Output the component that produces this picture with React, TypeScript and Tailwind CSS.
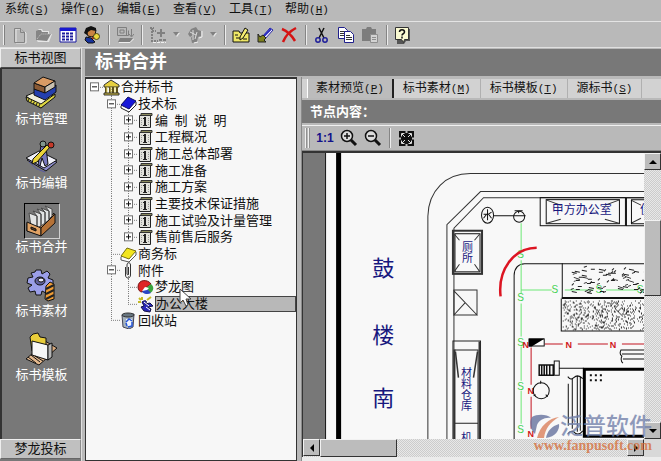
import type { ReactNode } from "react";

const menus = [
  { label: "系统", hotkey: "S" },
  { label: "操作", hotkey: "O" },
  { label: "编辑", hotkey: "E" },
  { label: "查看", hotkey: "V" },
  { label: "工具", hotkey: "T" },
  { label: "帮助", hotkey: "H" },
];

const tabs = [
  { label: "素材预览", hotkey: "P", active: true },
  { label: "标书素材", hotkey: "M", active: false },
  { label: "标书模板", hotkey: "T", active: false },
  { label: "源标书", hotkey: "S", active: false },
];

type TreeIcon = "bank" | "bluebook" | "doc" | "yellowbook" | "clip" | "chart" | "design" | "bin";

// guides: one entry per column. "|" line through, "+" branch, "L" last branch, " " empty
type TreeNode = { text: string; icon: TreeIcon; guides: string; box?: "+" | "-"; selected?: boolean; pointer?: boolean };

const treeNodes: TreeNode[] = [
  { text: "合并标书", icon: "bank", guides: "-", box: "-" },
  { text: "技术标", icon: "bluebook", guides: " +", box: "-" },
  { text: "编\u2002制\u2002说\u2002明", icon: "doc", guides: " |+", box: "+" },
  { text: "工程概况", icon: "doc", guides: " |+", box: "+" },
  { text: "施工总体部署", icon: "doc", guides: " |+", box: "+" },
  { text: "施工准备", icon: "doc", guides: " |+", box: "+" },
  { text: "施工方案", icon: "doc", guides: " |+", box: "+" },
  { text: "主要技术保证措施", icon: "doc", guides: " |+", box: "+" },
  { text: "施工试验及计量管理", icon: "doc", guides: " |+", box: "+" },
  { text: "售前售后服务", icon: "doc", guides: " |L", box: "+" },
  { text: "商务标", icon: "yellowbook", guides: " +" },
  { text: "附件", icon: "clip", guides: " +", box: "-" },
  { text: "梦龙图", icon: "chart", guides: " |+", pointer: true },
  { text: "办公大楼", icon: "design", guides: " |L", selected: true },
  { text: "回收站", icon: "bin", guides: " L" },
];

function Hotkey({ letter }: { letter: string }) {
  return (
    <span className="font-['Liberation_Mono',monospace] text-[11px]">
      (<u>{letter}</u>)
    </span>
  );
}

function Separator() {
  return (
    <div className="flex h-5 w-[9px] shrink-0 justify-center">
      <div className="w-[2px] border-l border-[#858585] bg-[#ececec]" />
    </div>
  );
}

function ToolButton({ label, children }: { label: string; children: ReactNode }) {
  return (
    <button type="button" aria-label={label} className="flex h-6 w-6 shrink-0 items-center justify-center">
      <svg width="18" height="18" viewBox="0 0 18 18" fill="none">
        {children}
      </svg>
    </button>
  );
}

function DropButton({ label }: { label: string }) {
  return (
    <button type="button" aria-label={label} className="flex h-6 w-[13px] shrink-0 items-center justify-center">
      <svg width="7" height="5" viewBox="0 0 7 5">
        <path d="M1 1h6L4 5z" fill="#e6e6e6" />
        <path d="M0 0h6L3 4z" fill="#808080" />
      </svg>
    </button>
  );
}

function MainToolbar() {
  return (
    <div className="flex h-[25px] items-center overflow-hidden pl-[3px]">
      <div className="mr-[3px] h-5 w-[2px] shrink-0 border-r border-[#808080] bg-[#eeeeee]" />
      <ToolButton label="新建">
        <path d="M5 3h6l4 4v10H5z" stroke="#e8e8e8" />
        <path d="M4 2.500h6l3.500 3.500v10.500H3.500v-14zM9.500 2.500v4h4" stroke="#848484" />
      </ToolButton>
      <ToolButton label="打开">
        <path d="M2 15V5l2-2h3l1 2h6v3h3l-3 8H3z" fill="#e6e6e6" />
        <path d="M1 14V5l2-1h3l1 2h6v2h3l-4 7z" fill="#858585" />
        <path d="M2 13l4-5h9" stroke="#c8c8c8" strokeDasharray="1 1" />
      </ToolButton>
      <ToolButton label="列表">
        <path d="M1 2h16v14H1z" fill="#fff" stroke="#1717a0" />
        <path d="M1 2h16v3H1z" fill="#1a1ad0" />
        <path d="M3 7.500h12M3 10.500h12M3 13.500h12" stroke="#1d1d9c" strokeWidth="2" strokeDasharray="3 1" />
      </ToolButton>
      <ToolButton label="用户">
        <path d="M3 5c0-4 9-4 10-1l-1 5-3 2-4-1z" fill="#c98343" stroke="#111" />
        <path d="M1 7l2-5 5-2 5 2v3L8 4 5 6 4 9z" fill="#111" />
        <path d="M3 11l5 1 4 4-2 1H5l-3-3z" fill="#16329b" stroke="#111" />
        <path d="M9 12h3" stroke="#a43220" strokeWidth="2" />
        <circle cx="13.500" cy="10.500" r="3" fill="#ead83d" stroke="#4f4715" />
      </ToolButton>
      <Separator />
      <ToolButton label="输出">
        <path d="M1.500 1.500h9v8h-9zM4 4h4v3H4zM6 9.500h6.500v-5" stroke="#7f7f7f" />
        <path d="M15.500 3v7M13 8l2.500 3L18 8" stroke="#7f7f7f" />
        <path d="M4 12h13l-3 4H2z" fill="#7f7f7f" />
        <path d="M3 16.500h11l4-4" stroke="#eee" />
      </ToolButton>
      <Separator />
      <ToolButton label="添加节点">
        <path d="M3 2v13h6M3 5h4M1 2h4" stroke="#808080" strokeWidth="2" strokeDasharray="2 1" />
        <path d="M12 3v8M8 7h8" stroke="#808080" strokeWidth="2" />
        <path d="M4 16.500h13" stroke="#efefef" strokeDasharray="3 1" />
        <path d="M10 14h7" stroke="#808080" strokeWidth="2" strokeDasharray="3 1" />
      </ToolButton>
      <DropButton label="添加节点选项" />
      <ToolButton label="更新">
        <path d="M2 8l3-5 5-2 2 3 3 1v5l-3 1-1 5-5 1-1-5 2-3-3 2z" fill="#838383" />
        <path d="M7 4v10M4 6l6 3M11 6l-2 7" stroke="#ddd" />
        <path d="M13 12l3-1v-6M8 17l4-1" stroke="#f0f0f0" />
      </ToolButton>
      <DropButton label="更新选项" />
      <Separator />
      <ToolButton label="属性">
        <path d="M1 5h6l1 2h9v9H1z" fill="#eee766" stroke="#111" />
        <path d="M8 11l5-9 3 2-5 8-3 2z" fill="#f4ed72" stroke="#111" />
        <path d="M4 12h4M11 13h4M3 9h3" stroke="#111" />
      </ToolButton>
      <ToolButton label="编辑">
        <path d="M6 11l8-9 3 2-8 9z" fill="#fff" stroke="#2424a8" />
        <path d="M7 11l8-8" stroke="#2a2ac0" strokeWidth="2" />
        <path d="M2 8v8h8l-2-2 2-2-3-3-3 2z" fill="#7d801d" stroke="#222" />
      </ToolButton>
      <ToolButton label="删除">
        <path d="M2 3c5 2 10 7 13 12M16 2C10 5 5 11 3 16" stroke="#d51414" strokeWidth="2.500" />
      </ToolButton>
      <Separator />
      <ToolButton label="剪切">
        <path d="M6 2l5 10M11 2L6 12" stroke="#111" strokeWidth="1.500" />
        <circle cx="5" cy="14" r="2.200" stroke="#20209a" strokeWidth="1.500" />
        <circle cx="12" cy="14" r="2.200" stroke="#20209a" strokeWidth="1.500" />
      </ToolButton>
      <ToolButton label="复制">
        <path d="M1.500 1.500h6l3 3v8h-9z" fill="#fff" stroke="#20208c" />
        <path d="M3 5.500h5M3 7.500h4M3 9.500h4" stroke="#333" />
        <path d="M7.500 5.500h6l3 3v8h-9z" fill="#fff" stroke="#20208c" />
        <path d="M9 9.500h4M9 11.500h6M9 13.500h6" stroke="#333" />
      </ToolButton>
      <ToolButton label="粘贴">
        <path d="M1 3h4l1-2h4l1 2h4v12H1z" fill="#7d7d7d" />
        <path d="M9.500 8.500h7v8h-7z" fill="#d3d3d3" stroke="#8e8e8e" />
        <path d="M11 11.500h4M11 13.500h4" stroke="#8e8e8e" />
      </ToolButton>
      <Separator />
      <ToolButton label="帮助">
        <path d="M3 3h13v12h-4l-2 3H3z" fill="#555" />
        <path d="M1.500 1.500h13v12h-4l-1 3-2-3h-6z" fill="#fafad2" stroke="#333" />
        <path d="M5.500 6c0-3 5-3 5 0 0 2-2.500 1.500-2.500 3.500M8 10.500v2" stroke="#111" strokeWidth="1.500" />
      </ToolButton>
    </div>
  );
}

function NavItem({ label, selected, children }: { label: string; selected?: boolean; children: ReactNode }) {
  return (
    <button type="button" className="flex h-16 w-full flex-col items-center text-[13px] leading-4 text-white">
      <span
        className={
          selected
            ? "h-9 w-9 border border-t-black border-l-black border-r-[#d0d0d0] border-b-[#d0d0d0]"
            : "h-9 w-9 border border-transparent"
        }
      >
        <svg width="34" height="34" viewBox="0 0 34 34" fill="none" stroke="#111" strokeLinejoin="round">
          {children}
        </svg>
      </span>
      {label}
    </button>
  );
}

function Sidebar() {
  return (
    <aside className="flex w-[82px] shrink-0 flex-col border-r border-[#e0e0e0] bg-[#787878]">
      <button type="button" className="h-5 border border-t-[#eeeeee] border-l-[#eeeeee] border-r-[#8c8c8c] border-b-[#4a4a4a] bg-[#c4c4c4] text-[13px] leading-4">
        标书视图
      </button>
      <nav className="flex-1 border-t border-l-2 border-[#333333] pt-[6px]">
        <NavItem label="标书管理">
          <path d="M1 20l14-6 14 6-13 12z" fill="#f1efda" />
          <path d="M1 21l15 7 14-10v3L16 32 2 25z" fill="#ded640" />
          <path d="M3 24l12 6" stroke="#222" strokeWidth="3" strokeDasharray="1 2" />
          <path d="M9 13v6l11 5 11-8v-7l-10 7z" fill="#243fae" />
          <path d="M9 7l11 4v6L9 13z" fill="#8a5a35" />
          <path d="M9 7l9-6 12 4-10 6z" fill="#d99b64" />
          <path d="M20 11l10-6v6l-10 6z" fill="#c9c0b0" />
        </NavItem>
        <NavItem label="标书编辑">
          <path d="M2 20l13-6 17 8-11 9z" fill="#8b8bc9" />
          <path d="M1 18l13-7 18 9-13 8z" fill="#f1f1fa" />
          <path d="M16 5l5 2 2 17-3 2-3-8-2 8-2-1z" fill="#7777bb" />
          <circle cx="18" cy="4" r="3" fill="#80978e" />
          <path d="M8 19L22 5l3 2-13 15-5 2z" fill="#ead33a" />
          <circle cx="26" cy="5" r="3" fill="#c43929" />
          <path d="M4 22l8 7 8 3" stroke="#5858a4" />
        </NavItem>
        <NavItem label="标书合并" selected>
          <path d="M2 19l13 4 14-14v10L16 31 2 27z" fill="#d28d4c" />
          <path d="M4 9l8 3v13l-6-3zM8 7l8 3v12l-4 2V12zM12 5l8 3v11l-4 3V10zM16 4l8 3v9l-4 3V8zM20 2l7 3v7l-3 3V7z" fill="#e2e4e4" stroke="#4a4a4a" />
          <path d="M2 18l14 6v8L2 27z" fill="#e0a264" />
          <path d="M16 24l14-14v9L16 32z" fill="#b57237" />
          <path d="M6 23l5 2v2l-5-2z" fill="#5f3d20" />
        </NavItem>
        <NavItem label="标书素材">
          <path d="M11 2h5l1 4 5-3 3 3-2 4 5 2v5l-5 1 2 4-4 3-4-2-1 4h-5l-1-4-5 1-2-4 4-3-5-2 1-5 5-1-2-4 4-1z" fill="#9a9ee8" />
          <ellipse cx="15" cy="13" rx="5" ry="4" fill="#60609d" />
          <ellipse cx="16" cy="12" rx="3" ry="2" fill="#e6e6ff" />
          <path d="M21 18l4-4 4 2v15l-6 2-3-2z" fill="#ef9c35" />
          <path d="M21 21l8-4M21 26l8-4M21 31l8-4" stroke="#222" strokeWidth="2" />
        </NavItem>
        <NavItem label="标书模板">
          <path d="M20 9l12 7-9 8z" fill="#d9aa7d" />
          <path d="M1 27l7-6 14 5-8 7z" fill="#e5b98d" />
          <path d="M5 5l3-3 5-1 2 4 6 1v17L7 19z" fill="#e9cd3a" />
          <path d="M7 9l16 4v15L7 23z" fill="#f7f7f7" />
          <path d="M23 13l4-2v14l-4 3z" fill="#b6b6b6" />
          <path d="M3 25l8 6M6 23l9 7M10 24l8 5" />
        </NavItem>
      </nav>
      <button type="button" className="mb-[2px] h-5 border border-t-[#eeeeee] border-l-[#eeeeee] border-r-[#8c8c8c] border-b-[#666666] bg-[#c0c0c0] text-[13px] leading-4">
        梦龙投标
      </button>
    </aside>
  );
}

const treeIcons: Record<TreeIcon, ReactNode> = {
  bank: (
    <>
      <path d="M1 6l7-5 8 5v2H1z" fill="#e6cf3d" stroke="#333" />
      <path d="M3 8v6M7 8v6M10 8v6M14 8v6" stroke="#5d5018" strokeWidth="2" />
      <path d="M4 8v6M8 8v6M12 8v6" stroke="#f2e56c" />
      <path d="M1 14h15v2H1z" fill="#d2bd36" stroke="#333" />
    </>
  ),
  bluebook: (
    <>
      <path d="M1 10l7-8 8 4v3l-7 7-8-4z" fill="#fff" stroke="#222" />
      <path d="M1 9l7-8 8 4-7 8z" fill="#1717d8" stroke="#101060" />
    </>
  ),
  doc: (
    <>
      <path d="M2.500 3.500h11v12h-11z" fill="#e2e2dc" stroke="#222" />
      <path d="M4 1.500h11v2H4z" fill="#8b8b5e" stroke="#333" />
      <path d="M4.500 6v8M11.500 6v8" stroke="#999" strokeDasharray="1 1" />
      <path d="M7 5h2v8H7zM6 6h2v1H6zM6 13h4v1H6z" fill="#222" />
    </>
  ),
  yellowbook: (
    <>
      <path d="M1 11l6-8 9 3v3l-7 7-8-2z" fill="#fff" stroke="#555" />
      <path d="M1 10l6-8 9 3-7 8z" fill="#f2e51d" stroke="#777013" />
    </>
  ),
  clip: (
    <path d="M5.500 5v8c0 4 5 4 5 0V3c0-3-3.500-3-3.500 0v9c0 1 1.500 1 1.500 0V5" stroke="#333" />
  ),
  chart: (
    <>
      <path d="M1 8c0-8 10-8 13-3l-6 4-3 4c-2 0-4-2-4-5z" fill="#df2525" stroke="#761616" />
      <path d="M14 5c4 3 2 8-1 9l-4-5z" fill="#39a43c" />
      <path d="M5 13l4-4 5 5c-3 2-7 1-9-1z" fill="#2945c5" />
      <path d="M5 12l3-4 4 1-2 2z" fill="#fff" />
    </>
  ),
  design: (
    <>
      <path d="M2 2l2 2M5 1v3M1 6h3M10 4l4-3" stroke="#c4ba24" strokeWidth="2" />
      <path d="M5 6c4-3 6 0 3 2l5-1 3 3-5 1 3 2-1 3-6-1-3-4 3-1z" fill="#2828b8" stroke="#111145" />
      <path d="M7 6l5 4M9 11l4 3" stroke="#fff" />
    </>
  ),
  bin: (
    <>
      <path d="M2 3l12-1-1 13-4 2-6-2z" fill="#a6b3bd" stroke="#445" />
      <ellipse cx="8" cy="3" rx="6" ry="2" fill="#687680" stroke="#333" />
      <path d="M6 7h6v7H6z" fill="#eef4ff" />
      <path d="M6 10l3-3 3 2M12 10v4l-4 1M7 14l-1-3" stroke="#2453d5" strokeWidth="1.500" />
    </>
  ),
};

function GuideCell({ kind, box, opensBelow }: { kind: string; box?: "+" | "-"; opensBelow?: boolean }) {
  return (
    <svg className="h-full w-[17px] shrink-0 overflow-visible" stroke="#808080" strokeDasharray="1 1">
      {kind === "|" || kind === "+" ? <line x1="8.5" x2="8.5" y1="0" y2="100%" /> : null}
      {kind === "L" ? <line x1="8.5" x2="8.5" y1="0" y2="50%" /> : null}
      {kind === "+" || kind === "L" || kind === "-" ? <line x1="8" x2="18" y1="50%" y2="50%" /> : null}
      {opensBelow ? <line x1="25.5" x2="25.5" y1="60%" y2="100%" /> : null}
      {box ? (
        <svg y="50%" overflow="visible" strokeDasharray="none">
          <rect x="4.5" y="-4.500" width="8" height="8" fill="#fff" stroke="#707070" />
          <path d={box === "+" ? "M6 -.5h5M8.500 -3v5" : "M6 -.5h5"} stroke="#111" />
        </svg>
      ) : null}
    </svg>
  );
}

function TreeView() {
  return (
    <div className="w-[212px] shrink-0 overflow-hidden border border-t-2 border-[#333333] bg-[#f7f7f7] text-[13px]">
      <ul className="grid h-[250px] auto-rows-fr">
        {treeNodes.map((node) => (
          <li key={node.text} className="flex min-h-0 items-center">
            {node.guides.split("").map((kind, i, all) => (
              <GuideCell
                key={i}
                kind={kind}
                box={i === all.length - 1 ? node.box : undefined}
                opensBelow={i === all.length - 1 && node.box === "-"}
              />
            ))}
            <svg width="17" height="17" viewBox="0 0 17 17" fill="none" className="relative mr-px shrink-0">
              {treeIcons[node.icon]}
            </svg>
            {node.selected ? (
              <span className="h-4 flex-1 border border-[#444444] bg-[#b8b8b8] leading-[14px]">{node.text}</span>
            ) : (
              <span className="relative leading-4 whitespace-nowrap">
                {node.text}
                {node.pointer ? (
                  <svg width="13" height="20" viewBox="0 0 13 20" className="absolute top-[9px] left-[24px] z-10">
                    <path d="M1 1v14l3-3 3 6 2-1-2-6h5z" fill="#fff" stroke="#444" />
                  </svg>
                ) : null}
              </span>
            )}
          </li>
        ))}
      </ul>
    </div>
  );
}

// small fixed-seed generator, keeps the hatching stable between renders
function scatter(count: number, seed: number) {
  const points: number[][] = [];
  let s = seed;
  const next = () => {
    s = (s * 16807) % 2147483647;
    return s / 2147483647;
  };
  for (let i = 0; i < count; i++) points.push([next(), next(), next()]);
  return points;
}

const grassPath = scatter(75, 4211)
  .map(([a, b, c]) => `M${Math.round(570 + a * 74)} ${Math.round(268 + b * 27)}l${Math.round(2 + c * 4)} ${Math.round(c * 4 - 2)}`)
  .join("");

const gravelPath = scatter(560, 977)
  .map(([a, b]) => `M${Math.round(563 + a * 80)} ${Math.round(301 + b * 29)}h1`)
  .join("");

function PlanText({ x, y, size, children }: { x: number; y: number; size: number; children: string }) {
  return (
    <text x={x} y={y} fontSize={size} textAnchor="middle" dominantBaseline="central" fill="#17177e" stroke="none">
      {children}
    </text>
  );
}

// room names written top to bottom, y is the top of the first character
function RoomText({ x, y, children }: { x: number; y: number; children: string }) {
  return (
    <text x={x} y={y} fontSize="11" writingMode="vertical-rl" fill="#17177e" stroke="none">
      {children}
    </text>
  );
}

function SitePlan() {
  return (
    <svg viewBox="304 154 340 286" preserveAspectRatio="xMinYMin slice" className="block h-full w-full" fill="none" stroke="#333">
      <rect x="304" y="153" width="22" height="900" fill="#787878" stroke="none" />
      <path d="M326.500 153v900" stroke="#111" />
      <path d="M339.500 153v900" stroke="#000" strokeWidth="5" />

      {/* roads */}
      <path d="M428.500 900V217C429 192 446 174 472 174.500H1200" />
      <path d="M447.500 900V225.500L481 192.500H1200" />
      <path d="M454.500 900V229L484 198.500H1200" />
      <path d="M514.500 900V276Q515 265 525 264.500H1200" stroke="#111" />

      <PlanText x={384} y={269} size={22}>鼓</PlanText>
      <PlanText x={384} y={336} size={22}>楼</PlanText>
      <PlanText x={384} y={399} size={22}>南</PlanText>

      {/* left column of rooms */}
      <rect x="453.500" y="231.500" width="29" height="43" strokeWidth="2" />
      <rect x="455.500" y="234.500" width="25" height="38" stroke="#111" />
      <path d="M455 235l5 6M480 235l-5 6M455 272l5-7M480 272l-5-7" />
      <RoomText x={467} y={242}>厕所</RoomText>
      <path d="M454.500 290.500h23v25h-23zM454 291l24 25M466 303l-12 13" />
      <path d="M453.500 900V341.500h27.500V900M455 350.500h23.500V900M455 423.500h24" stroke="#222" />
      <path d="M455 350v549M480 342v557" strokeWidth="2" />
      <path d="M456 352l3 26M478 352l-4 26" strokeWidth="1.500" />
      <RoomText x={466} y={368}>材料仓库</RoomText>
      <RoomText x={466} y={432}>机</RoomText>

      {/* water supply */}
      <ellipse cx="488" cy="216" rx="6" ry="8" stroke="#111" />
      <path d="M488 210v11M484 215h3l-3 4M492 213l-3 2 3 4M494 216.500h19M515 211.500h8M519 211v3M513 216.500h13" stroke="#111" />
      <circle cx="519.500" cy="217.500" r="5.500" stroke="#111" />
      <g stroke="#6de877">
        <path d="M521.500 224v27M521.500 261v33M521.500 304v33M521.500 347v34M521.500 391v33M522 290.500h30M565 290.500h29M606 290.500h32" />
        <g fill="#45d254" stroke="none" fontSize="10" textAnchor="middle">
          <text x="521" y="259">S</text>
          <text x="521" y="302">S</text>
          <text x="521" y="346">S</text>
          <text x="521" y="390">S</text>
          <text x="521" y="433">S</text>
          <text x="555" y="294">S</text>
          <text x="599" y="294">S</text>
          <text x="640" y="294">S</text>
        </g>
      </g>
      <path d="M537 248.500C514 249 498 270 501 297" stroke="#dc1522" strokeWidth="2.500" />

      {/* offices */}
      <rect x="540.500" y="198.500" width="85" height="28" stroke="#111" />
      <rect x="546.500" y="200.500" width="73" height="24" stroke="#111" />
      <path d="M547 201l14 5M619 201l-14 5M547 224l14-4M619 224l-14-4M631 201l10 5M631 224l10-5" />
      <path d="M700 198.500h-73.500v28H700M700 200.500h-68.500v24H700" stroke="#111" />
      <PlanText x={582} y={211} size={12}>甲方办公室</PlanText>
      <PlanText x={646} y={211} size={12}>值</PlanText>

      {/* planting and gravel */}
      <path d="M562.500 264v34" stroke="#111" />
      <path d="M562 298.500h500" stroke="#111" strokeWidth="2" />
      <path d="M561.500 299v32.500H1062" stroke="#111" />
      <path d={grassPath} stroke="#222" />
      <path d={gravelPath} stroke="#333" transform="translate(0 .5)" />

      {/* power line */}
      <g stroke="#d46068">
        <path d="M545 344.500h18M578 344.500h30M622 344.500h200M531.500 348v37M531.500 397v32" strokeWidth="1.500" />
        <g fill="#d01822" stroke="none" fontSize="9" fontWeight="bold" textAnchor="middle">
          <text x="526" y="348">N</text>
          <text x="569" y="348">N</text>
          <text x="613" y="348">N</text>
          <text x="531" y="394">N</text>
          <text x="531" y="437">N</text>
        </g>
      </g>
      <path d="M529.500 339.500h15v7h-15z" fill="#fff" stroke="#111" />
      <path d="M529 339h16l-13 8h-3z" fill="#000" stroke="none" />

      {/* machine shed */}
      <path d="M539.500 365.500h14v10h-14zM542 365v10M544.500 365v10M547 365v10M550 365v10" stroke="#111" strokeWidth="1.500" />
      <path d="M554.500 361.500h5v14h-5zM559 368.500h25" stroke="#111" />
      <circle cx="541.500" cy="391" r="8" stroke="#111" />
      <path d="M541 381v3M534 396l2-1M548 397l-2-2" stroke="#111" />
      <path d="M1000 369.500H584.500v67H1000" stroke="#000" strokeWidth="3" />
      <path d="M568.500 384v42M572.500 379v50M577.500 376v56M580.500 377v54M568 377q3 4 6 1 4-4 9 1M568 434q3-4 6-2 4 5 9-1" stroke="#111" />
      <path d="M650 350.500h-29q-2 4 1 6-2 4 1 7M622 354.500h28M623 359.500h27" stroke="#111" />
      <path d="M590 375.500h14M590 380.500h14" stroke="#111" strokeWidth="2" strokeDasharray="2 3" />
    </svg>
  );
}

function ScrollButton({ label, d }: { label: string; d: string }) {
  return (
    <button
      type="button"
      aria-label={label}
      className="flex h-[17px] w-[17px] shrink-0 items-center justify-center border border-t-[#f2f2f2] border-l-[#f2f2f2] border-r-[#333333] border-b-[#333333] bg-[#bcbcbc]"
    >
      <svg width="8" height="8" viewBox="0 0 8 8">
        <path d={d} fill="#000" />
      </svg>
    </button>
  );
}

function Watermark() {
  return (
    <div className="pointer-events-none absolute right-[9px] bottom-2 z-20 flex flex-col items-end opacity-80">
      <div className="flex items-center">
        <svg width="30" height="25" viewBox="0 0 30 25">
          <path d="M2 3c5-3 15-3 19 1-6-1-12 2-14 7L5 20C0 16-1 7 2 3z" fill="#66739f" />
          <path d="M29 3C19 4 10 12 7 24h7C15 15 20 8 29 3z" fill="#dc815c" />
          <path d="M16 24c1-7 6-12 13-14 1 6-4 13-13 14z" fill="#66739f" />
        </svg>
        <span className="text-[23px] leading-[26px] font-medium text-[#7482ab]">泛普软件</span>
      </div>
      <span className="font-['Liberation_Serif',serif] text-[14px] leading-[14px] font-bold text-[#d5713f]">www.fanpusoft.com</span>
    </div>
  );
}

function PreviewPane() {
  return (
    <section className="ml-1 flex min-w-0 flex-1 flex-col border-l border-[#8a8a8a]">
      <div role="tablist" className="mt-[2px] flex h-[19px] bg-[#d2d2d2] pl-[5px] text-[12px] leading-[19px]">
        {tabs.map((tab) => (
          <button
            key={tab.label}
            type="button"
            role="tab"
            aria-selected={tab.active}
            className={
              tab.active
                ? "shrink-0 border-r-2 border-l border-l-white border-r-[#222222] bg-[#bcbcbc] px-2 whitespace-nowrap"
                : "shrink-0 border-r border-[#b0b0b0] px-[9px] whitespace-nowrap"
            }
          >
            {tab.label}
            <Hotkey letter={tab.hotkey} />
          </button>
        ))}
      </div>
      <h2 className="mt-[2px] h-[23px] bg-[#787878] pl-2 text-[13px] leading-[23px] font-bold text-white">节点内容：</h2>
      <div className="mt-[2px] flex h-[26px] items-center border-t border-b border-t-[#f0f0f0] border-b-[#888888] pl-[3px]">
        <div className="h-5 w-[2px] border-l border-[#f0f0f0] bg-[#909090]" />
        <div className="mr-[3px] ml-px h-5 w-[2px] border-l border-[#f0f0f0] bg-[#909090]" />
        <button type="button" className="h-6 w-6 text-[12px] font-bold text-[#12128a]">1:1</button>
        <ToolButton label="放大">
          <circle cx="7" cy="7" r="5.500" fill="#ddd" stroke="#111" strokeWidth="1.500" />
          <path d="M4 7h6M7 4v6" stroke="#111" strokeWidth="1.500" />
          <path d="M11 11l5 5" stroke="#111" strokeWidth="3" />
        </ToolButton>
        <ToolButton label="缩小">
          <circle cx="7" cy="7" r="5.500" fill="#ddd" stroke="#111" strokeWidth="1.500" />
          <path d="M4 7h6" stroke="#111" strokeWidth="1.500" />
          <path d="M11 11l5 5" stroke="#111" strokeWidth="3" />
        </ToolButton>
        <Separator />
        <ToolButton label="适合窗口">
          <path d="M2 2h15v15H2z" fill="#111" />
          <path d="M9.500 1v3M9.500 15v3M1 9.500h3M15 9.500h3" stroke="#bcbcbc" strokeWidth="2" />
          <path d="M4.500 7.500v-3h3M11.500 4.500h3v3M14.500 11.500v3h-3M7.500 14.500h-3v-3M5 5l3 3M14 5l-3 3M14 14l-3-3M5 14l3-3" stroke="#ddd" />
        </ToolButton>
      </div>
      <div className="grid min-h-0 flex-1 grid-cols-[1fr_17px] grid-rows-[1fr_18px] border-t-2 border-l border-[#333333]">
        <div className="min-h-0 overflow-hidden bg-[#f8f8f8]">
          <SitePlan />
        </div>
        <div className="flex flex-col bg-[repeating-conic-gradient(#e8e8e8_0_25%,#cccccc_0_50%)] bg-[length:2px_2px]">
          <ScrollButton label="向上滚动" d="M0 6h8L4 2z" />
          <div className="flex min-h-0 flex-1 flex-col">
            <div className="h-1/5" />
            <div className="h-[30%] border border-t-[#f2f2f2] border-l-[#f2f2f2] border-r-[#555555] border-b-[#333333] bg-[#bcbcbc]" />
          </div>
          <ScrollButton label="向下滚动" d="M0 2h8L4 6z" />
        </div>
        <div className="flex bg-[repeating-conic-gradient(#e8e8e8_0_25%,#cccccc_0_50%)] bg-[length:2px_2px]">
          <ScrollButton label="向左滚动" d="M6 0v8L2 4z" />
          <div className="flex flex-1">
            <div className="w-1/4 border border-t-[#f2f2f2] border-l-[#f2f2f2] border-r-[#333333] border-b-[#333333] bg-[#bcbcbc]" />
          </div>
          <ScrollButton label="向右滚动" d="M2 0v8l4-4z" />
        </div>
        <div className="bg-[#d8d8d8]" />
      </div>
      <div className="h-1 bg-[#ececec]" />
    </section>
  );
}

export default function App() {
  return (
    <div className="relative flex h-screen flex-col overflow-hidden bg-[#b9b9b9] font-['Liberation_Sans','Noto_Sans_CJK_SC',sans-serif] text-[#111111]">
      <nav className="flex h-[22px] shrink-0 border-b border-[#e4e4e4] pl-[5px] text-[12px] leading-[18px]">
        {menus.map((menu) => (
          <button key={menu.label} type="button" className="h-[18px] w-14 shrink-0 text-left whitespace-nowrap">
            {menu.label}
            <Hotkey letter={menu.hotkey} />
          </button>
        ))}
      </nav>
      <MainToolbar />
      <div className="flex min-h-0 flex-1 border-t border-[#e0e0e0]">
        <Sidebar />
        <main className="ml-[3px] flex min-w-0 flex-1 flex-col">
          <h1 className="mt-px h-[27px] shrink-0 bg-[#787878] pl-[10px] text-[18px] leading-[27px] font-bold text-white">标书合并</h1>
          <div className="mt-px flex min-h-0 flex-1">
            <TreeView />
            <PreviewPane />
          </div>
        </main>
      </div>
      <Watermark />
    </div>
  );
}
